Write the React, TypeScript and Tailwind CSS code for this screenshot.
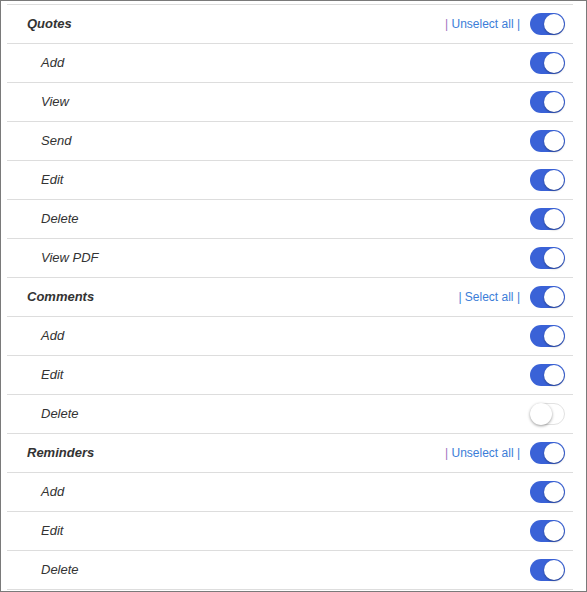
import React from "react";

type Row = { label: string; header?: boolean; on: boolean; link?: string };

const rows: Row[] = [
  { label: "Quotes", header: true, on: true, link: "Unselect all" },
  { label: "Add", on: true },
  { label: "View", on: true },
  { label: "Send", on: true },
  { label: "Edit", on: true },
  { label: "Delete", on: true },
  { label: "View PDF", on: true },
  { label: "Comments", header: true, on: true, link: "Select all" },
  { label: "Add", on: true },
  { label: "Edit", on: true },
  { label: "Delete", on: false },
  { label: "Reminders", header: true, on: true, link: "Unselect all" },
  { label: "Add", on: true },
  { label: "Edit", on: true },
  { label: "Delete", on: true },
];

function Toggle({ on }: { on: boolean }) {
  return on ? (
    <div className="relative w-[35px] h-[22px] rounded-full bg-[#3a62d7]">
      <div className="absolute right-[1px] top-[1px] w-[20px] h-[20px] rounded-full bg-white shadow-[0_1px_2px_rgba(0,0,0,0.35)]" />
    </div>
  ) : (
    <div className="relative w-[35px] h-[22px] rounded-full bg-white border border-[#e2e2e2]">
      <div className="absolute left-[-1px] top-[-1px] w-[22px] h-[22px] rounded-full bg-white shadow-[0_1px_3px_rgba(0,0,0,0.4)]" />
    </div>
  );
}

export default function App() {
  return (
    <div
      className="w-[587px] h-[592px] border border-[#7a7a7a] bg-white pt-[3px] pl-[6px] pr-[13px]"
      style={{ fontFamily: '"Liberation Sans", Arial, sans-serif' }}
    >
      <div className="border-b border-[#dddddd]">
        {rows.map((r, i) => (
          <div
            key={i}
            className="flex items-center h-[39px] border-t border-[#dddddd]"
          >
            <div
              className={
                r.header
                  ? "pl-[20px] text-[13px] font-bold italic text-[#333333] flex-1"
                  : "pl-[34px] text-[13px] italic text-[#333333] flex-1"
              }
            >
              {r.label}
            </div>
            {r.link && (
              <div className="text-[12px] mr-[10px] text-[#3b7dd8]">
                <span className={r.link === "Unselect all" ? "text-[#a175c0]" : "text-[#3b7dd8]"}>|</span>{" "}
                {r.link} |
              </div>
            )}
            <div className="mr-[8px]">
              <Toggle on={r.on} />
            </div>
          </div>
        ))}
      </div>
    </div>
  );
}
